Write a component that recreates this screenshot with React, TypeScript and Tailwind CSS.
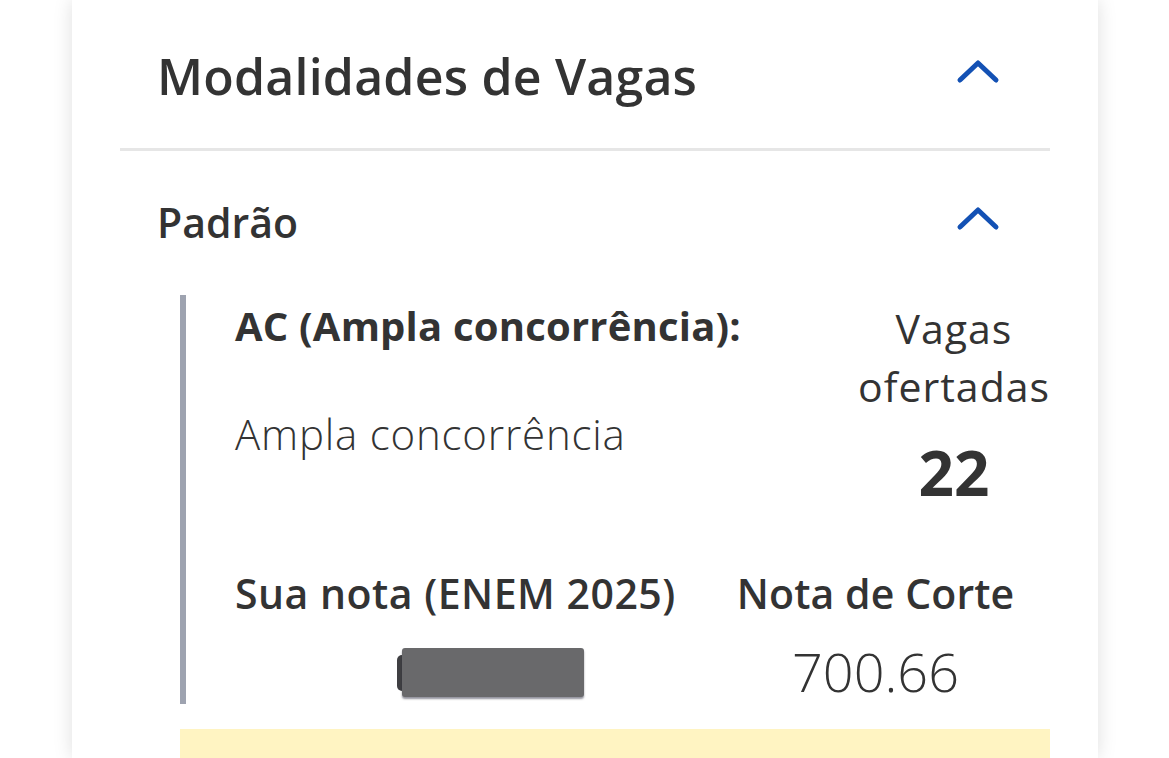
import React from 'react'

function Chevron() {
  return (
    <svg width="44" height="26" viewBox="0 0 44 26" fill="none" className="shrink-0">
      <path d="M4 21 L22 4 L40 21" stroke="#1351b4" strokeWidth="5" strokeLinecap="round" strokeLinejoin="round" />
    </svg>
  )
}

export default function App() {
  return (
    <div className="min-h-screen bg-white pl-[72px] overflow-hidden" style={{ fontFamily: '"Open Sans", Lato, sans-serif' }}>
      <div className="w-[1026px] bg-white px-[48px] shadow-[0_0_18px_rgba(0,0,0,0.13)] text-[#333333] h-[758px]">
        {/* header */}
        <div className="h-[148px] pt-[4px] pl-[37px] pr-[50px] flex items-center justify-between">
          <h1 className="text-[50px] font-semibold tracking-[0.2px]">Modalidades de Vagas</h1>
          <div className="-mt-[9px]">
            <Chevron />
          </div>
        </div>
        <div className="h-[3px] bg-[#e6e6e6]" />

        {/* Padrão */}
        <div className="h-[144px] pl-[37px] pr-[50px] flex items-center justify-between">
          <h2 className="text-[41px] font-semibold">Padrão</h2>
          <div className="-mt-[8px]">
            <Chevron />
          </div>
        </div>

        <div className="ml-[60px] border-l-[6px] border-[#9ea3b0] pl-[49px] h-[409px]">
          <div className="flex justify-between">
            <div className="pt-[8px]">
              <p className="text-[40px] font-bold leading-[46px] tracking-[0.2px]">AC (Ampla concorrência):</p>
              <p className="text-[42px] font-light leading-[46px] mt-[62px] tracking-[0.8px]">Ampla concorrência</p>
            </div>
            <div className="w-[192px] text-center pt-[4px]">
              <p className="text-[41px] leading-[58px] tracking-[1px]">Vagas ofertadas</p>
              <p className="text-[62px] font-bold leading-[80px] mt-[17px]">22</p>
            </div>
          </div>

          <div className="flex gap-[61px] mt-[56px]">
            <div className="text-center">
              <p className="text-[41px] font-semibold leading-[50px] tracking-[0.5px]">Sua nota (ENEM 2025)</p>
              <div className="inline-flex items-center ml-[70px] mt-[30px]">
                <div className="w-[5px] h-[36px] rounded-l-full bg-[#3f3f42]" />
                <div className="w-[182px] h-[49px] bg-[#69696b] rounded-[3px] shadow-[0_2px_2px_rgba(40,40,60,0.5)]" />
              </div>
            </div>
            <div className="text-center">
              <p className="text-[41px] font-semibold leading-[50px] tracking-[0.1px]">Nota de Corte</p>
              <p className="text-[54px] font-light leading-[58px] mt-[24px]">700.66</p>
            </div>
          </div>
        </div>

        <div className="ml-[60px] mt-[25px] h-[60px] bg-[#fff4c2]" />
      </div>
    </div>
  )
}
